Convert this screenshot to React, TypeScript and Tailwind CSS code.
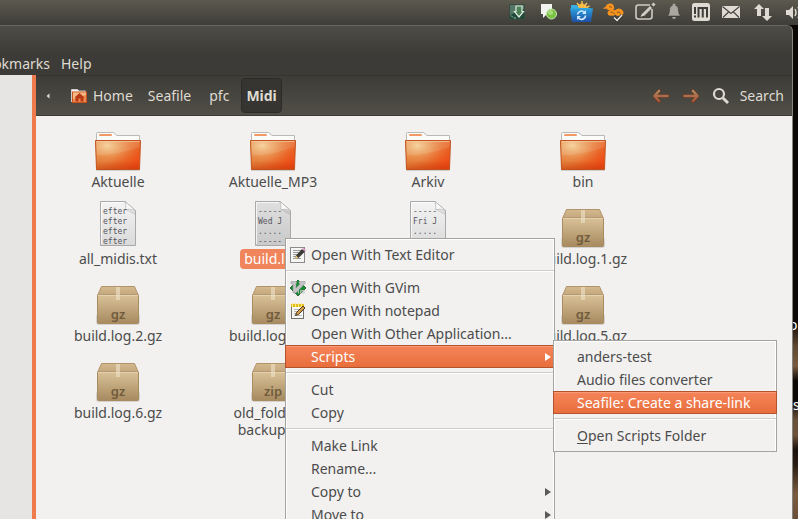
import React from "react";

type Kind = "folder" | "doc" | "archive";
type FileEntry = { name: string; kind: Kind; lines?: string[]; tag?: string; selected?: boolean };

const files: FileEntry[] = [
  { name: "Aktuelle", kind: "folder" },
  { name: "Aktuelle_MP3", kind: "folder" },
  { name: "Arkiv", kind: "folder" },
  { name: "bin", kind: "folder" },
  { name: "all_midis.txt", kind: "doc", lines: ["efter", "efter", "efter", "efter"] },
  { name: "build.log", kind: "doc", lines: ["-----", "Wed J", ".....", "-----"], selected: true },
  { name: "build.log.0", kind: "doc", lines: ["-----", "Fri J", ".....", "-----"] },
  { name: "build.log.1.gz", kind: "archive", tag: "gz" },
  { name: "build.log.2.gz", kind: "archive", tag: "gz" },
  { name: "build.log.3.gz", kind: "archive", tag: "gz" },
  { name: "build.log.4.gz", kind: "archive", tag: "gz" },
  { name: "build.log.5.gz", kind: "archive", tag: "gz" },
  { name: "build.log.6.gz", kind: "archive", tag: "gz" },
  { name: "old_folders_ backup.zip", kind: "archive", tag: "zip" },
];

function Defs() {
  return (
    <svg width="0" height="0" className="absolute" aria-hidden="true">
      <defs>
        <linearGradient id="folderBase" x1="0" y1="0" x2="1" y2="0.7">
          <stop offset="0" stopColor="#e08a3c" />
          <stop offset="0.5" stopColor="#e4813a" />
          <stop offset="1" stopColor="#ee4a14" />
        </linearGradient>
        <radialGradient id="folderGlow" cx="0.26" cy="0.18" r="0.7">
          <stop offset="0" stopColor="#f6cf96" />
          <stop offset="0.45" stopColor="#eda262" stopOpacity="0.75" />
          <stop offset="1" stopColor="#ee6a35" stopOpacity="0" />
        </radialGradient>
        <linearGradient id="folderFoot" x1="0" y1="0" x2="0" y2="1">
          <stop offset="0.7" stopColor="#c83a0a" stopOpacity="0" />
          <stop offset="1" stopColor="#c83a0a" stopOpacity="0.6" />
        </linearGradient>
        <linearGradient id="paper" x1="0" y1="0" x2="0" y2="1">
          <stop offset="0" stopColor="#f4f4f4" />
          <stop offset="1" stopColor="#dadada" />
        </linearGradient>
        <linearGradient id="paperDark" x1="0" y1="0" x2="0" y2="1">
          <stop offset="0" stopColor="#dfdfdf" />
          <stop offset="1" stopColor="#c9c9c9" />
        </linearGradient>
        <linearGradient id="boxFront" x1="0" y1="0" x2="0" y2="1">
          <stop offset="0" stopColor="#d9c197" />
          <stop offset="1" stopColor="#a78a5f" />
        </linearGradient>
        <linearGradient id="boxTop" x1="0" y1="0" x2="0" y2="1">
          <stop offset="0" stopColor="#d4ba8f" />
          <stop offset="1" stopColor="#c2a57c" />
        </linearGradient>
        <linearGradient id="blueFolder" x1="0" y1="0" x2="0" y2="1">
          <stop offset="0" stopColor="#2d9fdb" />
          <stop offset="1" stopColor="#1d4fa6" />
        </linearGradient>
        <linearGradient id="arrowFill" gradientUnits="userSpaceOnUse" x1="0" y1="2" x2="0" y2="14">
          <stop offset="0" stopColor="#b18a60" />
          <stop offset="1" stopColor="#ab5234" />
        </linearGradient>
      </defs>
    </svg>
  );
}

function FolderIcon() {
  return (
    <svg width="48" height="48" viewBox="0 0 48 48" aria-hidden="true">
      <rect x="2" y="45" width="44" height="2" rx="1" fill="#000" opacity="0.14" />
      <path d="M2.500 17V9.500Q2.500 8.500 3.500 8.500H19.500L23 11.500H45.500V17Z" fill="#fbfbfa" stroke="#b9b9b6" />
      <rect x="5" y="10" width="13" height="2" rx="1" fill="#f09a66" />
      <path d="M1.500 16.500H46.500L45.500 45.500H2.500Z" fill="url(#folderBase)" />
      <path d="M1.500 16.500H46.500L45.500 45.500H2.500Z" fill="url(#folderGlow)" />
      <path d="M2 17H46L45.800 23Q24 31 2.300 31.500Z" fill="#fff" opacity="0.1" />
      <path d="M1.500 16.500H46.500L45.500 45.500H2.500Z" fill="url(#folderFoot)" stroke="#c1531f" />
      <path d="M2.500 17.500H45.500" stroke="#fbd3b0" opacity="0.6" />
    </svg>
  );
}

function DocIcon({ lines, selected }: { lines: string[]; selected?: boolean }) {
  return (
    <svg width="48" height="48" viewBox="0 0 48 48" aria-hidden="true">
      <path d="M6.500 0.500H31L41.500 9.500V44.500H6.500Z" fill={selected ? "url(#paperDark)" : "url(#paper)"} stroke="#a9a9a9" />
      <path d="M7.500 43V1.500H30" fill="none" stroke="#fff" opacity="0.7" />
      <path d="M31 0.500Q32.500 6 31.500 8.500Q36 7.500 41.500 9.500Z" fill="#fafafa" stroke="#b0b0b0" strokeWidth="0.700" />
      <path d="M31.500 9Q36 8.500 41 11V14Z" fill="#000" opacity="0.1" />
      <g fill="#55555c" fontSize="8" fontFamily="'DejaVu Sans Mono', monospace">
        {lines.map((line, i) => (
          <text key={i} x="9" y={13 + i * 10}>{line}</text>
        ))}
      </g>
    </svg>
  );
}

function ArchiveIcon({ tag }: { tag: string }) {
  return (
    <svg width="48" height="48" viewBox="0 0 48 48" aria-hidden="true">
      <rect x="2" y="36" width="44" height="11" rx="3" fill="#000" opacity="0.12" />
      <path d="M7.500 8.500H40.500L44.500 17.500H3.500Z" fill="url(#boxTop)" stroke="#b3946a" />
      <rect x="3.500" y="17" width="41" height="28.500" rx="1" fill="url(#boxFront)" stroke="#a98b60" />
      <path d="M4 17.500H44" stroke="#ecdcbc" opacity="0.8" />
      <path d="M22 9H26V22H22Z" fill="#efe3ca" opacity="0.6" />
      <text x="24" y="41" textAnchor="middle" fontSize="13" fontWeight="600" fill="#705b3d" fontFamily="'Noto Sans', sans-serif">{tag}</text>
    </svg>
  );
}

function FileItem({ file }: { file: FileEntry }) {
  return (
    <button type="button" className="flex flex-col items-center">
      {file.kind === "folder" && <FolderIcon />}
      {file.kind === "doc" && <DocIcon lines={file.lines ?? []} selected={file.selected} />}
      {file.kind === "archive" && <ArchiveIcon tag={file.tag ?? ""} />}
      <span
        className={
          file.selected
            ? "rounded bg-[#f0845a] px-1 pt-px pb-[2px] leading-[17px] text-white"
            : "max-w-[104px] px-1 pt-px pb-[2px] leading-[17px]"
        }
      >
        {file.name}
      </span>
    </button>
  );
}

function TrayIcons() {
  const c = "#dfdbd2";
  const wide = "h-6 w-6 shrink-0";
  return (
    <div className="-mr-[9px] flex items-center justify-end gap-2">
      <button type="button" aria-label="Downloads" className={wide}>
        <svg width="24" height="24" viewBox="0 0 24 24">
          <rect x="4.500" y="4.500" width="15" height="15" fill="#1f4a3a" stroke="#3a4a40" />
          <path d="M5 5H19V9L5 15Z" fill="#7f9a8c" opacity="0.55" />
          <path d="M11 6H17V11.500H18.500L14 17L9.500 11.500H11Z" fill="#4a8055" stroke="#dfe9df" strokeWidth="1.200" />
          <path d="M6 15.500L8 17.500M9 18H11" stroke="#a9c2b2" />
        </svg>
      </button>
      <button type="button" aria-label="Messages" className={wide}>
        <svg width="24" height="24" viewBox="0 0 24 24">
          <path d="M4 4H15V14H10L6 18V14H4Z" fill="#f3f3f2" />
          <circle cx="14.500" cy="14" r="5" fill="#79c143" stroke="#c9eab0" />
          <circle cx="13.500" cy="12.500" r="2.500" fill="#a6dd78" />
        </svg>
      </button>
      <button type="button" aria-label="Sync folder" className={wide}>
        <svg width="24" height="24" viewBox="0 0 24 24">
          <circle cx="13" cy="8" r="4.500" fill="#f9b233" />
          <path d="M13 1V8M8 3L11 7M18 3L15 7M5.500 6L10 8M20.500 6L16 8" stroke="#f9c35a" strokeWidth="1.400" />
          <path d="M2 5H8L10 8H22V11H2Z" fill="#38aee4" />
          <path d="M1 8.500H24L22 22H3Z" fill="url(#blueFolder)" />
          <path d="M8.500 14.500A4 4 0 0 1 15.500 12.500M16.500 15.500A4 4 0 0 1 9.500 18" fill="none" stroke="#cfeaff" strokeWidth="1.600" />
          <path d="M17 10V14H13ZM8 20V16H12Z" fill="#cfeaff" />
        </svg>
      </button>
      <button type="button" aria-label="Seafile" className={wide}>
        <svg width="24" height="24" viewBox="0 0 24 24">
          <path d="M2 8.500Q3 7 4.500 7Q5.500 3.500 9 3.500Q12.500 3 13 7Q14 9 12 10Q15 10.500 16 9Q18 8 20.500 9.500Q23 11 22.500 13.500Q21.500 16 18.500 16Q15 16 14 14.500Q13 16.500 10 15.500Q7 16.500 6.500 13Q6.500 10.500 9 10.500Q6 10 5.500 8.500Q4 9 2 8.500Z" fill="#f6921e" />
          <path d="M9.500 12Q12 11.500 13.500 14M16 12.500Q18 11.500 19.500 13M8 6.500Q10 6 10.500 8" fill="none" stroke="#6b4a20" strokeWidth="0.800" />
          <path d="M13 17.500L16 20.500L21 15" fill="none" stroke="#3a3833" strokeWidth="3" />
          <path d="M13 17.500L16 20.500L21 15" fill="none" stroke="#e9e7e2" strokeWidth="1.500" />
        </svg>
      </button>
      <button type="button" aria-label="Notes" className={wide}>
        <svg width="24" height="24" viewBox="0 0 24 24" fill="none" stroke="#cfccc4" strokeWidth="1.600">
          <path d="M17 5H5.500Q3 5 3 7.500V16.500Q3 19 5.500 19H16.500Q19 19 19 16.500V9" />
          <path d="M10 15L18 7" strokeWidth="3" />
          <path d="M19.500 5.500L21.500 3.500" strokeWidth="3" />
          <path d="M7.500 17L9 13.500L11 15.500Z" fill={c} stroke="none" />
        </svg>
      </button>
      <button type="button" aria-label="Notifications" className="h-6 w-[18px] shrink-0">
        <svg width="18" height="24" viewBox="0 0 18 24">
          <path d="M9 5C13 5.500 13.500 8 13.500 11Q13.500 13.500 15.500 16H2.500Q4.500 13.500 4.500 11C4.500 8 5 5.500 9 5Z" fill="#aaa7a0" stroke="#2f2e2a" strokeWidth="0.500" />
          <circle cx="9" cy="5" r="1.500" fill="#aaa7a0" />
          <path d="M7 17H11Q10.500 19 9 19Q7.500 19 7 17Z" fill="#aaa7a0" />
        </svg>
      </button>
      <button type="button" aria-label="Status" className="h-6 w-5 shrink-0">
        <svg width="20" height="24" viewBox="0 0 20 24">
          <rect x="1" y="3" width="18" height="18" rx="2.500" fill={c} />
          <path d="M4 7V14M4 15.500V17.500M7.500 17.500V8H16V17.500M11.750 8V17.500" stroke="#3f3d38" strokeWidth="2" fill="none" />
        </svg>
      </button>
      <button type="button" aria-label="Mail" className={wide}>
        <svg width="24" height="24" viewBox="0 0 24 24">
          <rect x="3" y="6" width="18" height="12" fill={c} />
          <path d="M3.500 6.500L12 13.500L20.500 6.500M4 17.500L9.500 12M20 17.500L14.500 12" fill="none" stroke="#45433e" strokeWidth="1.100" />
        </svg>
      </button>
      <button type="button" aria-label="Network" className={wide}>
        <svg width="24" height="24" viewBox="0 0 24 24" fill={c}>
          <path d="M8 4L13 9H10V16H6V9H3Z" />
          <path d="M16 21L11 16H14V8H18V16H21Z" />
        </svg>
      </button>
      <button type="button" aria-label="Volume" className={wide}>
        <svg width="24" height="24" viewBox="0 0 24 24">
          <path d="M3 10H6L10 6V19L6 15H3Z" fill={c} />
          <path d="M12 9Q14 12.500 12 16M15 7Q18 12.500 15 18" stroke={c} strokeWidth="1.500" fill="none" />
        </svg>
      </button>
    </div>
  );
}

function EditorIcon() {
  return (
    <svg width="16" height="16" viewBox="0 0 16 16">
      <rect x="0.500" y="0.500" width="14" height="15" fill="#f6f6f6" stroke="#8b8b8b" />
      <path d="M3 3.500H11M3 5.500H9M3 7.500H9M3 9.500H7M3 11.500H11" stroke="#9a9a9a" />
      <path d="M5 12L6 8.500L12 2L15 4.500L8.500 11Z" fill="#3b3b38" />
      <path d="M5 12L6 8.500L8.500 11Z" fill="#e8cf7a" />
      <path d="M12 2L13.500 1L16 3L15 4.500Z" fill="#d796c2" />
    </svg>
  );
}

function VimIcon() {
  return (
    <svg width="16" height="16" viewBox="0 0 16 16">
      <path d="M8 0L16 8L8 16L0 8Z" fill="#168a32" stroke="#0c4c1b" strokeWidth="0.700" />
      <path d="M1 1.500H6.500V3.500L6 4V8L10 4L9 3.500V1.500H15V3.500L6 13H3V4H1Z" fill="#c3c3c3" stroke="#8b8e90" strokeWidth="0.500" />
      <path d="M8.500 9.500V13.500M10.500 13.500V10.500H12V13.500M12 10.500H14V13.500" stroke="#b5bdb7" fill="none" />
    </svg>
  );
}

function NotepadIcon() {
  return (
    <svg width="16" height="16" viewBox="0 0 16 16">
      <rect x="1.500" y="2.500" width="12" height="13" fill="#f7f7f5" stroke="#70706c" />
      <rect x="1" y="1" width="13" height="3" fill="#e5bf1e" />
      <path d="M2.500 0V4M5.500 0V4M8.500 0V4M11.500 0V4" stroke="#fbe77a" />
      <path d="M4 6.500H11M4 8.500H9M4 10.500H7M4 12.500H12" stroke="#b9b9b5" />
      <path d="M5.500 12.500L6.500 9.500L13 3L15 5L8.500 11.500Z" fill="#d39a4a" stroke="#3f2c14" strokeWidth="0.900" />
    </svg>
  );
}

type Entry = {
  label?: string;
  separator?: boolean;
  icon?: React.ReactNode;
  submenu?: boolean;
  active?: boolean;
  mnemonic?: boolean;
};

const contextItems: Entry[] = [
  { label: "Open With Text Editor", icon: <EditorIcon /> },
  { separator: true },
  { label: "Open With GVim", icon: <VimIcon /> },
  { label: "Open With notepad", icon: <NotepadIcon /> },
  { label: "Open With Other Application..." },
  { label: "Scripts", submenu: true, active: true },
  { separator: true },
  { label: "Cut" },
  { label: "Copy" },
  { separator: true },
  { label: "Make Link" },
  { label: "Rename..." },
  { label: "Copy to", submenu: true },
  { label: "Move to", submenu: true },
];

const scriptItems: Entry[] = [
  { label: "anders-test" },
  { label: "Audio files converter" },
  { label: "Seafile: Create a share-link", active: true },
  { separator: true },
  { label: "Open Scripts Folder", mnemonic: true },
];

function Menu({ items, icons, className }: { items: Entry[]; icons?: boolean; className: string }) {
  return (
    <div role="menu" className={"absolute flex flex-col border border-[#a3a3a0] bg-[#f2f1f0] py-1 shadow-[inset_1px_1px_0_#fff,inset_-1px_0_0_#fff] " + className}>
      {items.map((item, i) => {
        if (item.separator) {
          return <div key={i} role="separator" className="my-1 h-[2px] border-t border-[#cfcdca] bg-white" />;
        }
        return (
          <button
            key={i}
            type="button"
            role="menuitem"
            className={
              "-mx-px flex h-[23px] items-center border pr-[3px] " +
              (icons ? "gap-[5px] pl-1 " : "pl-[23px] ") +
              (item.active
                ? "border-[#b3532e] bg-linear-to-b from-[#f58459] to-[#e86e3c] text-white shadow-[inset_0_1px_0_#f99b76]"
                : "border-transparent")
            }
          >
            {icons && <span className="h-4 w-4 shrink-0">{item.icon}</span>}
            <span className="grow text-left leading-5 whitespace-nowrap">
              {item.mnemonic ? <><u className="underline-offset-2">{item.label!.charAt(0)}</u>{item.label!.slice(1)}</> : item.label}
            </span>
            {item.submenu && (
              <svg width="6" height="8" viewBox="0 0 6 8" aria-hidden="true">
                <path d="M0 0L6 4L0 8Z" fill={item.active ? "#fff" : "#5a5a58"} />
              </svg>
            )}
          </button>
        );
      })}
    </div>
  );
}

function NavArrow({ flip }: { flip?: boolean }) {
  return (
    <svg width="18" height="16" viewBox="0 0 18 16" className={flip ? "-scale-x-100" : ""} aria-hidden="true">
      <path d="M7 3L2.500 8L7 13M3 8H16" fill="none" stroke="#5b3a28" strokeWidth="4" strokeLinecap="round" strokeLinejoin="round" />
      <path d="M7 3L2.500 8L7 13M3 8H15.500" fill="none" stroke="url(#arrowFill)" strokeWidth="2.600" strokeLinecap="round" strokeLinejoin="round" />
    </svg>
  );
}

export default function App() {
  return (
    <div className="relative flex h-screen flex-col overflow-hidden bg-[#0b0806] font-['Noto_Sans','Open_Sans',sans-serif] text-sm text-[#4c4c4c]">
      <Defs />
      <header className="h-[25px] shrink-0 bg-linear-to-b from-[#5c594e] to-[#3e3d38]">
        <TrayIcons />
      </header>
      <div className="flex min-h-0 grow">
        <div className="flex min-w-0 grow flex-col rounded-tr-md border-t border-r border-t-[#6a675e] border-r-[#85837e] bg-linear-to-b from-[#4e4c46] to-[#3c3b37] to-[28px]">
          <nav className="flex h-[49px] shrink-0 items-end gap-[11px] pb-px text-[#dfdbd2]">
            <button type="button" className="flex w-[50px] justify-end leading-5">Bookmarks</button>
            <button type="button" className="leading-5">Help</button>
          </nav>
          <div className="flex min-h-0 grow">
            <aside className="w-9 shrink-0 border-r-4 border-[#ef7a4c] bg-[#e6e5e3]" />
            <main className="flex min-w-0 grow flex-col bg-[#f2f1f0]">
              <div className="flex h-[41px] shrink-0 items-center border-t border-b border-t-[#35342f] border-b-[#3a3934] bg-linear-to-b from-[#3d3c38] to-[#514f47] pr-2 pl-[10px] text-[#dfdbd2]">
                <button type="button" aria-label="Scroll path left">
                  <svg width="4" height="6" viewBox="0 0 4 6"><path d="M3.500 0.500L0.500 3L3.500 5.500Z" fill="#dfdbd2" /></svg>
                </button>
                <button type="button" className="ml-[21px] flex items-center gap-[6px]">
                  <svg width="16" height="16" viewBox="0 0 16 16" aria-hidden="true">
                    <path d="M0.500 14V1.500H6.500L8 3H14.500V5" fill="#f4f2ef" stroke="#cfcdc9" />
                    <rect x="1.500" y="4" width="14" height="10.500" fill="#ec8a50" stroke="#c9531f" />
                    <path d="M2 4.500H15V7L2 11Z" fill="#f5c592" opacity="0.8" />
                    <path d="M8.500 5L13.500 9.500H12.500V13.500H9.500V10.500H7.500V13.500H4.500V9.500H3.500Z" fill="#b83a17" />
                  </svg>
                  Home
                </button>
                <button type="button" className="ml-[15px]">Seafile</button>
                <button type="button" className="ml-[18px]">pfc</button>
                <button type="button" className="ml-3 h-[35px] rounded border border-[#2c2b28] bg-[#363531] px-1 font-bold">Midi</button>
                <div className="grow" />
                <button type="button" aria-label="Back"><NavArrow /></button>
                <button type="button" aria-label="Forward" className="ml-3"><NavArrow flip /></button>
                <button type="button" className="ml-3 flex items-center gap-[10px]">
                  <svg width="18" height="18" viewBox="0 0 18 18" fill="none" stroke="#dfdbd2" aria-hidden="true">
                    <circle cx="7" cy="7" r="5" strokeWidth="2.200" />
                    <path d="M11 11L16 16" strokeWidth="2.800" />
                  </svg>
                  Search
                </button>
              </div>
              <div className="grid grid-cols-[repeat(auto-fill,154px)] items-start gap-x-px gap-y-[9px] pt-2 pl-[5px]">
                {files.map((f) => <FileItem key={f.name} file={f} />)}
              </div>
            </main>
          </div>
        </div>
        <div className="w-[5px] shrink-0 overflow-hidden bg-[linear-gradient(to_bottom,#0b0806_60%,#5f4731_65%,#7a5c40_69%,#0c0806_72%,#0c0806_76%,#6a5039_80%,#6e5239_83%,#1a120c_86%,#2a1d13_89%,#7a5c40_95%,#6a5039_100%)] text-white">
          <p className="-ml-1 mt-[290px] leading-5">o</p>
          <p className="mt-[60px] leading-5">s</p>
        </div>
      </div>
      <Menu items={contextItems} icons className="top-[238px] left-[285px] w-[270px]" />
      <Menu items={scriptItems} className="top-[340px] left-[553px] w-[224px]" />
    </div>
  );
}
